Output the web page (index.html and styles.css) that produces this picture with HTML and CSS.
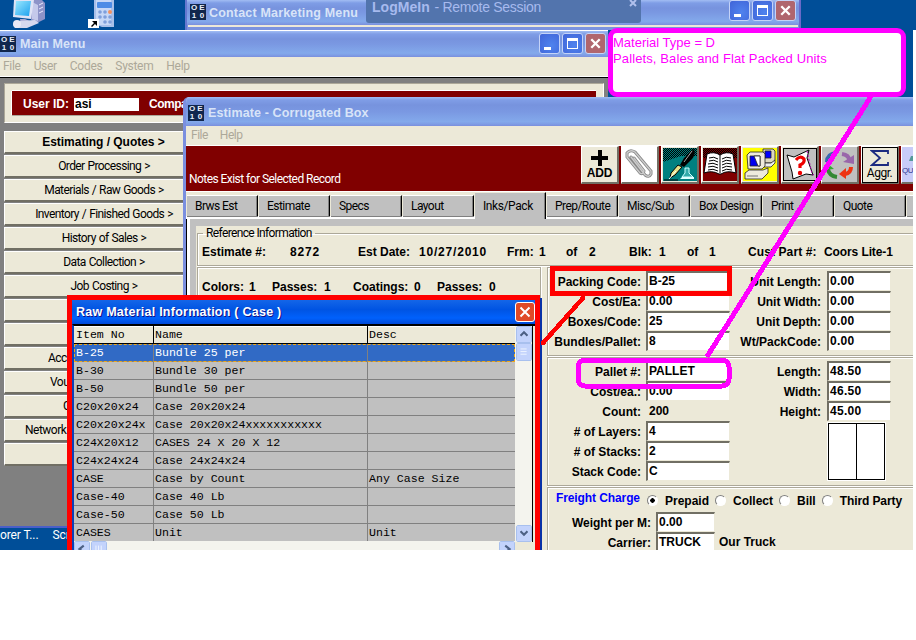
FILE: index.html
```
<!DOCTYPE html>
<html lang="en">
<head>
<meta charset="utf-8">
<title>Estimate - Corrugated Box</title>
<link rel="stylesheet" href="styles.css">
</head>
<body>
<svg width="0" height="0" class="defs" aria-hidden="true">
  <defs>
    <linearGradient id="scr" x1="0" y1="0" x2="1" y2="1"><stop offset="0" stop-color="#9be9ff"/><stop offset="1" stop-color="#1ba0ee"/></linearGradient>
    <pattern id="dots" width="2" height="2" patternUnits="userSpaceOnUse"><rect width="1" height="1"/><rect x="1" y="1" width="1" height="1"/></pattern>
  </defs>
</svg>
<div class="desktop">
  <div class="wallpaper">
    <svg class="desk-icon pc" width="34" height="30" viewBox="0 0 34 30"><path d="M19 0h11l3 3v16l-8 4-6-3z" fill="#8d93c8"/><path d="M20 2l6 3v16l-6-2z" fill="#c5c9ea"/><path d="M27 5l4-2M27 9l4-2M27 13l4-2" stroke="#e8eaff"/><path d="M2 0h20l-3 19L1 17z" fill="#dfe3f5"/><path d="M4 1h15l-2 15L3 15z" fill="url(#scr)"/><path d="M8 19l5 0 7 3-1 4H9z" fill="#a9a8d2"/><path d="M1 24l5-3 17-1 4 3-12 5H3z" fill="#d6d8ee"/><circle cx="5" cy="24" r="4" fill="#e9e9f6"/></svg>
    <svg class="desk-icon calc" width="28" height="30" viewBox="0 0 28 30"><path d="M6 0h20v27l-12 0-8-3z" fill="#a8bfe9"/><path d="M8 0h15v25H8z" fill="#c7d8f6"/><rect x="9" y="2" width="15" height="6" rx="1" fill="#4d8ce6"/><g fill="#7f9fdb"><circle cx="12" cy="12" r="1.8"/><circle cx="17" cy="12" r="1.8"/><circle cx="12" cy="17" r="1.8"/><circle cx="17" cy="17" r="1.8"/><circle cx="22" cy="17" r="1.8"/><circle cx="17" cy="22" r="1.8"/><circle cx="22" cy="22" r="1.8"/></g><circle cx="22" cy="12" r="2" fill="#f09060"/><path d="M0 19h11v9H0z" fill="#fff"/><path d="M4 21h5v5l-2-2-3 3-1-1 3-3z" fill="#000"/></svg>
  </div>

  <section class="window contact">
    <header class="title"><span class="oe"><i>O</i><i>E</i><i>1</i><i>0</i></span><span class="cap w-contact">Contact Marketing Menu</span>
      <span class="ctl"><i class="min"></i><i class="max"></i><i class="cls"><svg viewBox="0 0 18 18"><path d="M5 5l8 8M13 5l-8 8"/></svg></i></span></header>
    <div class="strip"></div>
  </section>
  <div class="remote"><b>LogMeIn</b> <span>- Remote Session</span><svg class="rx" width="8" height="8" viewBox="0 0 8 8"><path d="M1 0l6 6M7 0L1 6"/></svg></div>

  <section class="window main">
    <header class="title"><span class="oe"><i>O</i><i>E</i><i>1</i><i>0</i></span><span class="cap w-main">Main Menu</span>
      <span class="ctl"><i class="min"></i><i class="max"></i><i class="cls"><svg viewBox="0 0 18 18"><path d="M5 5l8 8M13 5l-8 8"/></svg></i></span></header>
    <nav class="menu"><span>File</span><span>User</span><span>Codes</span><span>System</span><span>Help</span></nav>
    <div class="main-body">
      <div class="userframe"><div class="userbar"><span>User ID:</span><span class="uid">asi</span><span>Compa</span></div></div>
      <div class="side">
        <div class="sb strong">Estimating / Quotes &gt;</div>
        <div class="sb">Order Processing &gt;</div>
        <div class="sb">Materials / Raw Goods &gt;</div>
        <div class="sb">Inventory / Finished Goods &gt;</div>
        <div class="sb">History of Sales &gt;</div>
        <div class="sb">Data Collection &gt;</div>
        <div class="sb">Job Costing &gt;</div>
        <div class="sb"></div>
        <div class="sb"></div>
        <div class="sb cut acc">Acc</div>
        <div class="sb cut vou">Vou</div>
        <div class="sb cut gl">G</div>
        <div class="sb cut net">Network</div>
        <div class="sb"></div>
      </div>
    </div>
  </section>
  <div class="taskbar"><span>orer T...</span><span>Scr</span></div>

  <section class="window estimate">
    <header class="title"><span class="oe"><i>O</i><i>E</i><i>1</i><i>0</i></span><span class="cap w-est">Estimate - Corrugated Box</span></header>
    <nav class="menu"><span>File</span><span>Help</span></nav>
    <div class="banner">
      <span class="note">Notes Exist for Selected Record</span>
      <div class="tools">
        <div class="tool add"><svg width="20" height="18" viewBox="0 0 20 18"><path d="M8 1h4v6h6v4h-6v6H8v-6H1V7h7z"/></svg><b>ADD</b></div>
        <div class="tool white"><svg width="34" height="33" viewBox="0 0 34 33"><g fill="none" stroke-linecap="round"><path d="M8 9l14 18q4 3 6-1v-3L12 4Q7 1 4 5v4l13 16q3 2 4-2L11 10" stroke="#888" stroke-width="3"/><path d="M8 9l14 18q4 3 6-1v-3L12 4Q7 1 4 5v4l13 16q3 2 4-2L11 10" stroke="#ccc" stroke-width="1.3"/></g></svg></div>
        <div class="tool teal"><svg width="34" height="33" viewBox="0 0 34 33"><path d="M0 0h34v8H18L0 14z" fill="url(#dots)"/><path d="M31 1q2 5-2 10l-8 8-4-2 4-7z" fill="#000"/><path d="M29 3l-8 11" stroke="#aaa"/><path d="M15 17l4 2-7 8-5 3 1-5z" fill="#e6e28a" stroke="#000"/><path d="M6 31l7-8" stroke="#fff"/><path d="M22 20h4v5l4 4H19l3-4z" fill="#3aa" stroke="#cff"/><path d="M19 29h12v2H17z" fill="#dff"/><path d="M1 32h14" stroke="#000"/></svg></div>
        <div class="tool book"><svg width="34" height="33" viewBox="0 0 34 33"><path d="M0 0h34v10H0z" fill="url(#dots)"/><path d="M4 6q7-3 13 1 6-4 13-1l3 19q-9-3-15 1h-2q-7-4-15-1z" fill="#fff" stroke="#000"/><path d="M17 7v18M6 10q5-2 9 1M6 13q5-2 9 1M5 16q5-2 10 1M5 19q5-2 10 1M5 22q5-2 10 1M19 11q4-3 9-1M19 14q4-3 9-1M19 17q4-3 10-1M19 20q4-3 10-1M19 23q4-3 10-1" fill="none" stroke="#000"/></svg></div>
        <div class="tool yellow"><svg width="34" height="33" viewBox="0 0 34 33"><g stroke="#222" stroke-width=".8"><path d="M20 1h10l2 2v9l-3 3h-9z" fill="#ddd8c0"/><path d="M22 3h6v7h-6z" fill="#00f"/><path d="M20 15h8l4-3v3l-4 4h-8z" fill="#eee"/><path d="M4 7l3-3h13l2 2v12l-3 3H5z" fill="#eeeadc"/><path d="M7 8h10v10H7z" fill="#00e"/><path d="M11 8h6v10h-2z" fill="#fff"/><path d="M2 25l4-3h14l5-2v5l-6 6H2z" fill="#eeeadc"/></g><path d="M4 28h11" stroke="#777"/></svg></div>
        <div class="tool ask"><svg width="34" height="33" viewBox="0 0 34 33"><path d="M4 7l7 2 15-7-2 8 6 17-7-1-13 5-1-7z" fill="#fff" stroke="#000"/><path d="M24 3l5 23 2 1" fill="none" stroke="#a0a" stroke-dasharray="2 2"/><path d="M13 12q4-5 8-1 1 4-4 6v3" fill="none" stroke="#e00" stroke-width="3.2"/><circle cx="17" cy="25" r="2.2" fill="#e00"/></svg></div>
        <div class="tool gray"><svg width="34" height="33" viewBox="0 0 34 33"><path d="M4 14q0-8 9-9" fill="none" stroke="#3b67b0" stroke-width="4"/><path d="M19 6q7 1 7 6" fill="none" stroke="#96a" stroke-width="4"/><path d="M20 14l11 2V7z" fill="#96a"/><path d="M14 29q-8-1-9-8" fill="none" stroke="#383" stroke-width="4"/><path d="M1 22l4-6 6 5z" fill="#3a3"/><path d="M28 19q0 6-6 7" fill="none" stroke="#e31" stroke-width="4"/><path d="M23 20v11l-7-5z" fill="#e31"/></svg></div>
        <div class="tool aggr"><svg width="20" height="18" viewBox="0 0 20 18"><path d="M18 5V2H2l8 7-8 7h16v-3" fill="none" stroke="#1b2a80" stroke-width="1.8"/></svg><span>Aggr.</span></div>
        <div class="tool quote"><svg width="10" height="10" viewBox="0 0 10 10"><path d="M4 3h6v5H2z" fill="#599"/></svg><span>QU</span></div>
      </div>
    </div>
    <div class="tabs">
      <div class="tab">Brws Est</div><div class="tab">Estimate</div><div class="tab">Specs</div><div class="tab">Layout</div><div class="tab active">Inks/Pack</div><div class="tab">Prep/Route</div><div class="tab">Misc/Sub</div><div class="tab">Box Design</div><div class="tab">Print</div><div class="tab">Quote</div><div class="tab"></div>
    </div>
    <div class="sheet">
      <div class="panel">
        <fieldset class="group ref"><legend>Reference Information</legend>
          <div class="refrow"><span>Estimate #:</span><span class="num">8272</span><span>Est Date:</span><span class="num">10/27/2010</span><span>Frm:</span><span>1</span><span>of</span><span>2</span><span>Blk:</span><span>1</span><span>of</span><span>1</span><span class="wide">Cust Part #:</span><span class="snug">Coors Lite-1</span></div>
        </fieldset>
        <div class="split">
          <div class="group inks"><div class="inkrow"><span>Colors:</span><span>1</span><span>Passes:</span><span>1</span><span>Coatings:</span><span>0</span><span>Passes:</span><span>0</span></div></div>
          <div class="right">
            <div class="group pack form">
              <label>Packing Code:</label><div class="in">B-25</div><label>Unit Length:</label><div class="in s">0.00</div>
              <label>Cost/Ea:</label><div class="in">0.00</div><label>Unit Width:</label><div class="in s">0.00</div>
              <label>Boxes/Code:</label><div class="in">25</div><label>Unit Depth:</label><div class="in s">0.00</div>
              <label>Bundles/Pallet:</label><div class="in">8</div><label>Wt/PackCode:</label><div class="in s">0.00</div>
            </div>
            <div class="group pallet form">
              <label>Pallet #:</label><div class="in">PALLET</div><label>Length:</label><div class="in s">48.50</div>
              <label>Cost/ea.:</label><div class="in">0.00</div><label>Width:</label><div class="in s">46.50</div>
              <label>Count:</label><div class="plain">200</div><label>Height:</label><div class="in s">45.00</div>
              <label>&#35; of Layers:</label><div class="in">4</div><div class="stackbox"><i></i><i></i></div>
              <label>&#35; of Stacks:</label><div class="in">2</div>
              <label>Stack Code:</label><div class="in">C</div>
            </div>
            <div class="group freight">
              <div class="radios"><span class="blue">Freight Charge</span><i class="on"></i><span>Prepaid</span><i></i><span>Collect</span><i></i><span>Bill</span><i></i><span class="snug">Third Party</span></div>
              <div class="form2"><label>Weight per M:</label><div class="in">0.00</div><span></span><label>Carrier:</label><div class="in">TRUCK</div><span>Our Truck</span></div>
            </div>
          </div>
        </div>
      </div>
    </div>
  </section>

  <section class="dialog">
    <div class="dlg-title"><span>Raw Material Information ( Case )</span><svg class="dx" width="20" height="20" viewBox="0 0 20 20"><path d="M5 5l10 10M15 5L5 15"/></svg></div>
    <div class="dlg-body">
      <div class="rows">
        <div class="row head"><span>Item No</span><span>Name</span><span>Desc</span></div>
        <div class="row sel"><span>B-25</span><span>Bundle 25 per</span><span></span></div>
        <div class="row"><span>B-30</span><span>Bundle 30 per</span><span></span></div>
        <div class="row"><span>B-50</span><span>Bundle 50 per</span><span></span></div>
        <div class="row"><span>C20x20x24</span><span>Case 20x20x24</span><span></span></div>
        <div class="row"><span>C20x20x24x</span><span>Case 20x20x24xxxxxxxxxxx</span><span></span></div>
        <div class="row"><span>C24X20X12</span><span>CASES 24 X 20 X 12</span><span></span></div>
        <div class="row"><span>C24x24x24</span><span>Case 24x24x24</span><span></span></div>
        <div class="row"><span>CASE</span><span>Case by Count</span><span>Any Case Size</span></div>
        <div class="row"><span>Case-40</span><span>Case 40 Lb</span><span></span></div>
        <div class="row"><span>Case-50</span><span>Case 50 Lb</span><span></span></div>
        <div class="row last"><span>CASES</span><span>Unit</span><span>Unit</span></div>
        <div class="hbar"><svg class="sbtn" width="16" height="17" viewBox="0 0 16 17"><path d="M10 4L5 8l5 4"/></svg><svg class="sbtn" width="16" height="17" viewBox="0 0 16 17"><path class="grip" d="M4.500 4v8M7.500 4v8M10.500 4v8"/></svg><svg class="sbtn end" width="16" height="17" viewBox="0 0 16 17"><path d="M6 4l5 4-5 4"/></svg></div>
      </div>
      <div class="vbar"><svg class="sbtn" width="16" height="17" viewBox="0 0 16 17"><path d="M4 10l4-4 4 4"/></svg><svg class="sbtn" width="16" height="18" viewBox="0 0 16 18"><path class="grip" d="M4 5.500h7M4 8.500h7M4 11.500h7"/></svg><svg class="sbtn end" width="16" height="17" viewBox="0 0 16 17"><path d="M4 6l4 4 4-4"/></svg></div>
    </div>
  </section>

  <div class="callout"><span>Material Type = D</span><span class="l2">Pallets, Bales and Flat Packed Units</span></div>
  <svg class="marks" width="916" height="550" viewBox="0 0 916 550"><g fill="none" shape-rendering="crispEdges" stroke-linecap="round"><rect x="552.5" y="268.500" width="177" height="25" stroke="#f00" stroke-width="5"/><path d="M583 298L543 343" stroke="#f00" stroke-width="4.5"/><path d="M870 98L708 355" stroke="#f0f" stroke-width="5"/><rect x="578" y="360" width="151" height="26" rx="7" stroke="#f0f" stroke-width="5"/></g></svg>
</div>
</body>
</html>
```
FILE: styles.css
```
*, *::before, *::after { box-sizing: border-box; }
body { margin: 0; background: #fff; font: 12px/16px "Liberation Sans", Arial, sans-serif; color: #000; }
i { font-style: normal; }
.defs { position: absolute; }
.desktop { position: relative; width: 916px; height: 640px; overflow: hidden; white-space: nowrap; }
.wallpaper { position: absolute; left: 0; top: 0; width: 913px; height: 550px; background: #004e98; }
.wallpaper::after { content: ""; position: absolute; left: 913px; top: 0; width: 3px; height: 30px; background: #004e98; }
.desk-icon { position: absolute; top: 0; }
.pc { left: 12px; }
.calc { left: 88px; }

/* window chrome */
.window { position: absolute; background: #ece9d8; }
.title { display: flex; align-items: center; color: #d8e4f8; background: linear-gradient(#a2bdf3 0, #7f9de6 3px, #7793de 8px, #7a98e2 50%, #83a9eb 85%, #7f9fe6 92%, #7a8fdd 100%); }
.oe { width: 16px; height: 16px; background: #10264d; color: #e8eefa; font: bold 8px/8px "Liberation Sans", Arial, sans-serif; display: grid; grid-template-columns: 8px 8px; grid-template-rows: 8px 8px; text-align: center; flex: none; }
.cap { font: bold 12.5px/18px "Liberation Sans", Arial, sans-serif; margin-left: 4px; }
.ctl { margin-left: auto; display: flex; gap: 2px; margin-top: -2px; }
.ctl > i { position: relative; width: 21px; height: 21px; border: 1px solid #c4d3f8; border-radius: 3px; background: radial-gradient(circle at 60% 60%, #4f83ee, #4064d8); }
.ctl .min::after { content: ""; position: absolute; left: 4px; top: 13px; width: 7px; height: 3px; background: #fff; }
.ctl .max::after { content: ""; position: absolute; left: 4px; top: 4px; width: 11px; height: 11px; border: 1px solid #fff; border-top-width: 3px; }
.ctl .cls { background: #b0666e; }
.cls svg { display: block; width: 19px; height: 19px; }
.cls path { stroke: #fff; stroke-width: 2.2; fill: none; }
.menu { display: flex; color: #aca899; font: 12px/18px Roboto, "Liberation Sans", sans-serif; letter-spacing: -.3px; }

.contact { left: 185px; top: 0; width: 616px; height: 30px; background: #7b93df; border-left: 2px solid #6478d0; border-right: 2px solid #6a6ac8; }
.contact .title { height: 25px; padding: 0 3px 2px 3px; }
.strip { height: 2px; background: #ece9d8; margin: 0 1px; }
.w-contact { letter-spacing: .18px; margin-top: 2px; margin-left: 3px; }
.remote { position: absolute; left: 366px; top: 0; width: 275px; height: 23px; background: #5274ad; color: #a7baee; border-radius: 0 0 3px 3px; padding-left: 6px; font: 14px/15px "Liberation Sans", Arial, sans-serif; letter-spacing: -.3px; }
.remote b { letter-spacing: .05px; margin-right: 1px; }
.rx { position: absolute; left: 263px; top: 0; }
.rx path { stroke: #b0c0ec; stroke-width: 2; }

.main { left: 0; top: 30px; width: 608px; height: 498px; background: #808080; border-top: 1px solid #fff; border-bottom: 2px solid #4a5fc8; }
.main .title { height: 26px; padding-right: 2px; }
.w-main { letter-spacing: .1px; }
.main .menu { height: 21px; padding: 0 3px; gap: 13px; background: #ece9d8; border-bottom: 1px solid #000; box-shadow: inset 0 -1px #fff; }
.main-body { padding: 5px 4px 0; }
.userframe { height: 40px; border: 1px solid #aca899; border-bottom-color: #fff; border-right-color: #fff; background: #ece9d8; padding: 7px 7px; }
.userbar { display: flex; align-items: center; height: 24px; background: #800000; color: #fff; box-shadow: 0 -1px #fff, 0 1px #aca899, -1px 0 #fff; padding-left: 11px; padding-top: 2px; font-weight: bold; font-size: 12px; }
.uid { background: #fff; color: #000; width: 65px; height: 13px; line-height: 13px; margin: 0 10px 0 5px; padding-left: 1px; }
.userbar .uid + span { letter-spacing: -.5px; }
.side { margin-top: 8px; }
.sb { width: 200px; height: 23px; margin-bottom: 1px; background: #ece9d8; border-top: 1px solid #fff; border-left: 1px solid #fff; border-bottom: 2px solid #716f64; text-align: center; font: 12px/20px Roboto, "Liberation Sans", sans-serif; letter-spacing: -.6px; word-spacing: .6px; padding-right: 1px; }
.sb.strong { font: bold 12px/20px "Liberation Sans", Arial, sans-serif; letter-spacing: -.02px; padding-right: 2px; word-spacing: 0; }
.sb.cut { text-align: left; letter-spacing: -.5px; }
.acc { padding-left: 43px; }
.vou { padding-left: 45px; }
.gl { padding-left: 58px; }
.net { padding-left: 20px; }
.taskbar { position: absolute; left: 0; top: 528px; width: 200px; height: 22px; background: #004e98; color: #fff; display: flex; gap: 14px; font: 12px/15px Roboto, "Liberation Sans", sans-serif; letter-spacing: -.1px; }

/* estimate window */
.estimate { left: 183px; top: 97px; width: 730px; height: 453px; border-left: 3px solid #7b8fdf; border-top-left-radius: 6px; overflow: hidden; }
.estimate .title { height: 29px; padding-top: 2px; padding-left: 2px; }
.w-est { letter-spacing: .12px; }
.estimate .menu { height: 20px; padding: 0 5px; gap: 12px; border-bottom: 1px solid #fff; letter-spacing: -.5px; }
.banner { display: flex; height: 45px; background: #800000; color: #fff; }
.note { flex: none; width: 395px; padding: 25px 0 0 3px; font: 12px/16px Roboto, "Liberation Sans", sans-serif; letter-spacing: -.55px; }
.tools { display: flex; gap: 2px; }
.tool { width: 38px; height: 38px; flex: none; background: #ece9d8; border: 1px solid #fff; border-right: 2px solid #716f64; border-bottom: 2px solid #716f64; color: #000; display: flex; flex-direction: column; align-items: center; justify-content: center; }
.tool b { font-size: 12px; line-height: 13px; letter-spacing: -.1px; }
.white { background: #fff; }
.teal svg { background: #008080; }
.book svg { background: #800000; }
.yellow svg { background: #ff0; }
.ask svg { background: #c0c0c0; outline: 1px solid #000; outline-offset: -1px; }
.gray { background: #c0c0c0; }
.aggr { outline: 1px solid #000; outline-offset: -2px; font: 12px/13px Roboto, "Liberation Sans", sans-serif; letter-spacing: -.5px; }
.quote { background: #c8ccf8; color: #303a90; font-size: 8px; line-height: 10px; align-items: flex-start; letter-spacing: -.5px; gap: 3px; }
.quote svg { margin-left: 5px; }
.tabs { display: flex; height: 28px; padding: 4px 0 0 1px; align-items: flex-start; box-shadow: inset 0 1px #fff, inset 0 -3px #fff; }
.tab { flex: none; width: 71px; height: 21px; margin-right: 1px; background: #c0c0c0; border-top: 1px solid #fff; border-right: 1px solid #000; box-shadow: inset -1px 0 #808080, 0 1px #808080; padding-left: 8px; font: 12px/20px Roboto, "Liberation Sans", sans-serif; letter-spacing: -.55px; }
.tab.active { height: 27px; margin-top: -3px; line-height: 26px; box-shadow: inset -1px 0 #808080; position: relative; border-top-color: #ece9d8; letter-spacing: -.4px; }
.sheet { height: 331px; background: #c0c0c0; border-left: 1px solid #000; box-shadow: inset 3px 0 #fff; padding: 7px 0 0 9px; }
.panel { height: 324px; background: #ece9d8; padding: 0 0 0 1px; font-weight: bold; }
.group { border: 1px solid #aca899; box-shadow: inset 1px 1px #fff, 0 1px #fff, 1px 0 #fff; }
.ref { margin: 0; padding: 0 0 0 5px; width: 730px; height: 40px; min-width: 0; }
.ref legend { font: 12px/14px Roboto, "Liberation Sans", sans-serif; padding: 0 3px; letter-spacing: -.63px; }
.refrow { display: grid; grid-template-columns: 88px 68px 61px 88px 32px 27px 23px 40px 30px 28px 22px 39px 76px auto; margin-top: 4px; margin-left: -1px; }
.snug { letter-spacing: -.1px; }
.wide { letter-spacing: .1px; }
.num { letter-spacing: .8px; }
.split { display: flex; margin-top: 1px; gap: 6px; }
.inks { flex: none; width: 344px; height: 290px; }
.inkrow { display: grid; grid-template-columns: 47px 23px 52px 29px 61px 23px 52px auto; padding: 11px 0 0 4px; }
.right { width: 380px; flex: none; }
.form { display: grid; grid-template-columns: 98px 84px 96px 65px; column-gap: 0; grid-auto-rows: 20px; align-items: center; justify-content: start; }
.form label, .form2 label { text-align: right; padding-right: 5px; line-height: 20px; padding-top: 1px; }
.in { height: 20px; background: #fff; border-left: 2px solid #716f64; border-top: 2px solid #716f64; border-right: 1px solid #ece9d8; border-bottom: 1px solid #ece9d8; line-height: 16px; padding-left: 1px; }
.form .in { width: 84px; align-self: start; }
.form .in.s { width: 64px; margin-left: 1px; letter-spacing: .3px; }
.plain { padding-left: 3px; }
.pack { height: 89px; padding: 3px 0 0 0; }
.pallet { height: 129px; margin-top: 1px; padding: 3px 0 0 0; }
.stackbox { grid-column: 3 / 5; grid-row: 4 / 7; align-self: start; margin: 2px 0 0 98px; width: 57px; height: 57px; display: flex; background: #fff; border: 1px solid #000; outline: 1px solid #fff; }
.stackbox i { width: 28px; }
.stackbox i:first-child { border-right: 1px solid #000; }
.freight { height: 80px; margin-top: 1px; }
.radios { display: flex; padding: 4px 0 0 8px; line-height: 18px; }
.radios .blue { color: #00f; width: 91px; line-height: 13px; letter-spacing: -.1px; }
.radios i { width: 11px; height: 11px; margin: 3px 7px 0 0; border-radius: 50%; background: #fff; border: 1px solid #808080; border-right-color: #fff; border-bottom-color: #fff; }
.radios i.on { background: radial-gradient(circle at 50% 50%, #000 0 2px, #fff 2.5px); }
.radios span + i { margin-left: 6px; }
.radios .blue + i { margin-left: 0; }
.form2 { display: grid; grid-template-columns: 108px 59px auto; grid-auto-rows: 20px; column-gap: 0; margin-top: 2px; }
.form2 > span { padding-left: 4px; line-height: 21px; }

/* lookup dialog */
.dialog { position: absolute; left: 67px; top: 295px; width: 473px; height: 255px; border: 5px solid #f00; border-bottom: 0; background: #fff; overflow: hidden; box-shadow: 2px 3px #0831a8; clip-path: inset(0 -2px 0 0); }
.dlg-title { height: 24px; display: flex; align-items: center; justify-content: space-between; padding-left: 4px; color: #fff; font: bold 12.5px/18px "Liberation Sans", Arial, sans-serif; letter-spacing: .25px; background: linear-gradient(#1466e8, #0054e3 40%, #0061fc 75%, #0048d8); text-shadow: 1px 1px #0f1089; }
.dx { background: #e04a28; border: 1px solid #fff; border-radius: 3px; }
.dx path { stroke: #fff; stroke-width: 2.2; }
.dlg-body { display: flex; border-top: 2px solid #000; border-left: 2px solid #0a3fb8; height: 231px; width: 463px; background: #ece9d8; }
.rows { flex: none; width: 441px; }
.row { display: grid; grid-template-columns: 80px 214px 147px; height: 18px; background: #c0c0c0; border-bottom: 1px solid #808080; font: 11.6px/17px "Liberation Mono", monospace; }
.row span { border-right: 1px solid #808080; padding-left: 2px; }
.row span + span { padding-left: 1px; }
.row span:last-child { border-right: 0; }
.row.head { background: #ece9d8; border-bottom: 1px solid #000; box-shadow: inset 0 1px #fff; }
.row.head span { border-right-color: #000; }
.row.head span:last-child { border-right: 0; }
.row.sel { background: #316ac5; color: #fff; outline: 1px dashed #f0a818; outline-offset: -1px; }
.row.last { border-bottom: 0; height: 17px; }
.hbar { display: flex; height: 17px; background: #f4f4ee; gap: 1px; }
.sbtn { background: #c3d3fc; border: 1px solid #fff; border-radius: 2px; outline: 1px solid #a8c0ee; outline-offset: -1px; flex: none; }
.sbtn path { fill: none; stroke: #4d6185; stroke-width: 2.4; }
.sbtn .grip { stroke: #f4f8ff; stroke-width: 1; }
.hbar .end { margin-left: auto; }
.vbar { flex: none; width: 17px; height: 216px; background: #f4f4ee; display: flex; flex-direction: column; padding-left: 1px; box-shadow: 1px 0 #000, 1px 20px #ece9d8; }
.vbar .end { margin-top: auto; }

/* annotations */
.callout { position: absolute; left: 608px; top: 28px; width: 298px; height: 69px; background: #fff; border: 5px solid #f0f; border-radius: 9px; color: #f0f; display: flex; flex-direction: column; font: 13px/16px "Liberation Sans", Arial, sans-serif; padding-top: 2px; }
.l2 { letter-spacing: .12px; }
.marks { position: absolute; left: 0; top: 0; }
```
